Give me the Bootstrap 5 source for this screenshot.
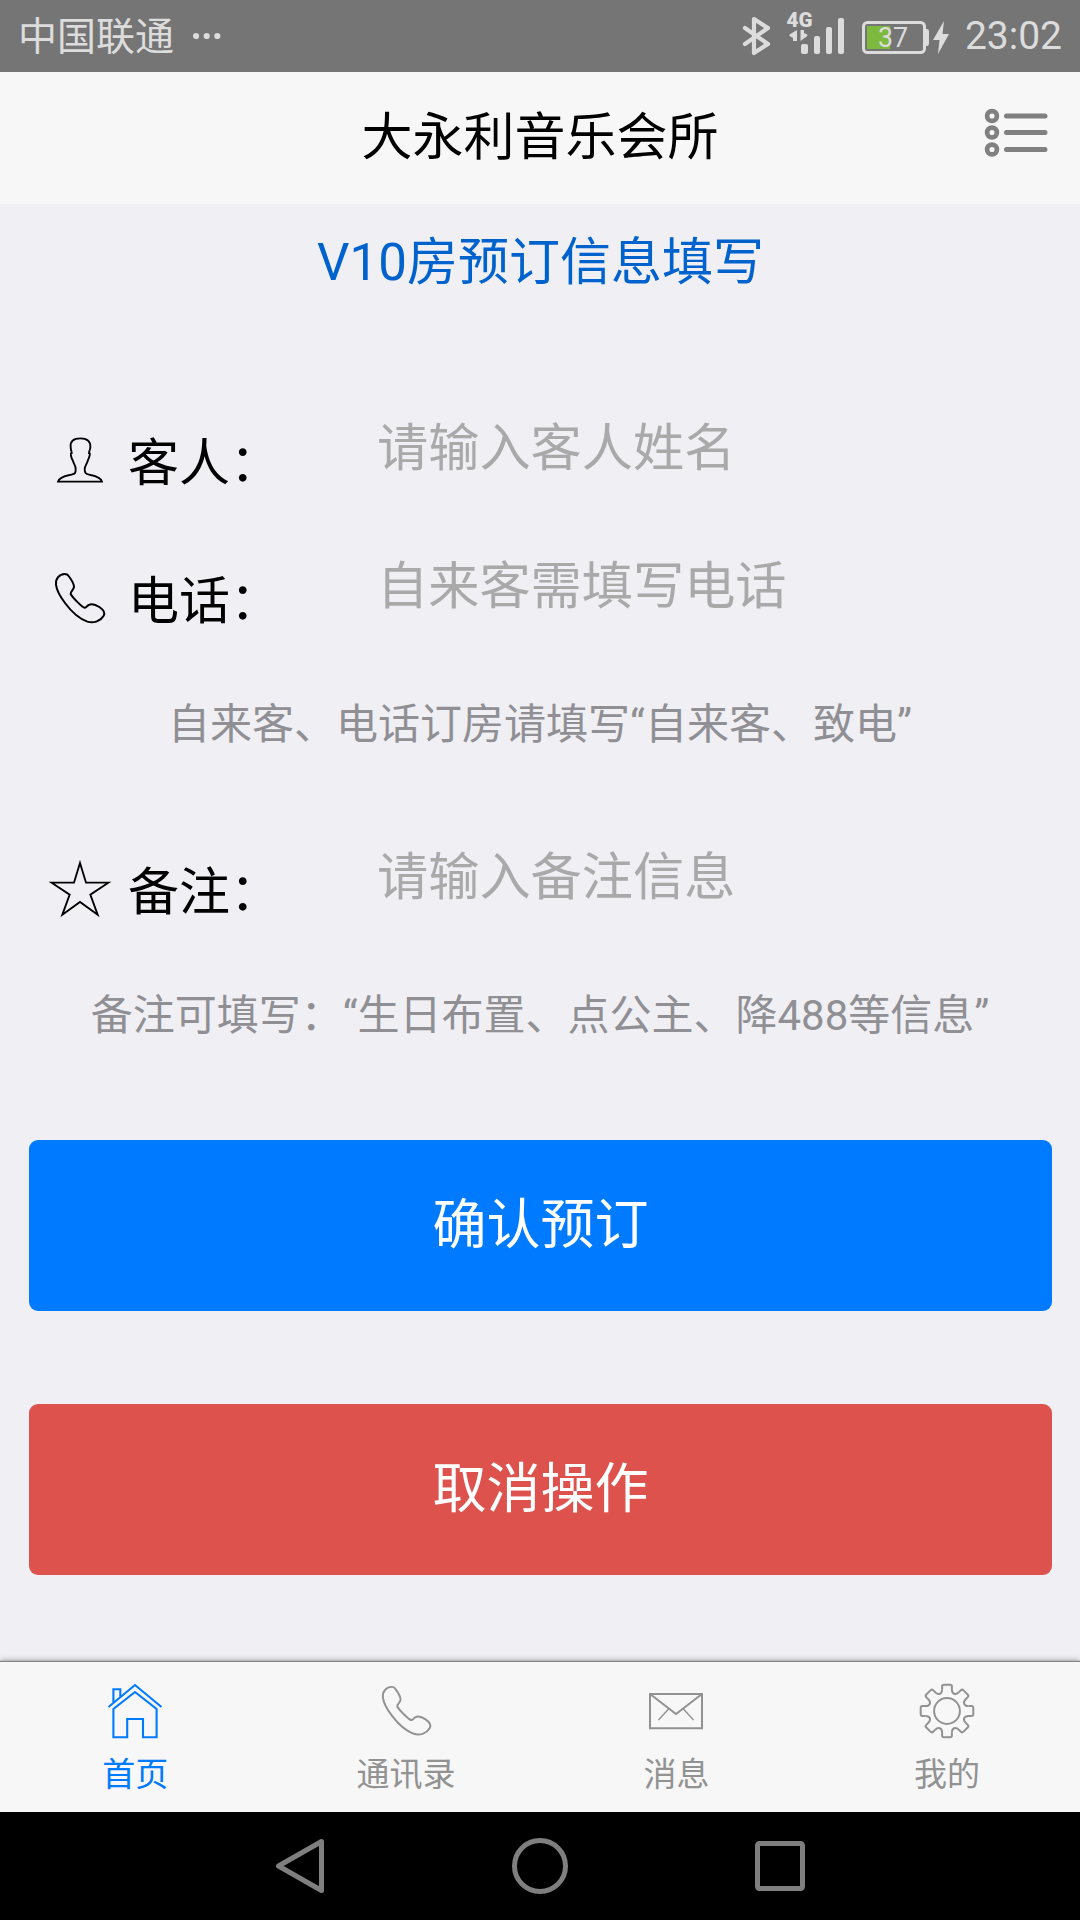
<!DOCTYPE html>
<html lang="zh-CN">
<head>
<meta charset="utf-8">
<meta name="viewport" content="width=device-width, initial-scale=1">
<title>大永利音乐会所</title>
<link href="https://cdn.jsdelivr.net/npm/bootstrap@5.3.0/dist/css/bootstrap.min.css" rel="stylesheet">
<style>
  body { font-family: Roboto, "Noto Sans CJK SC", sans-serif; font-size: 51px; line-height: 77px; color: #000; background: #efeff4; }
  .app { height: 1920px; width: 1080px; overflow: hidden; }
  .status-bar { height: 72px; background: #757575; color: #dcdcdc; font-size: 39px; line-height: 72px; padding: 0 18px 0 18px; }
  .status-bar svg { display: block; }
  .carrier { padding-top: 2px; }
  .signal-dots { margin-left: 19px; }
  .status-icons { margin-right: 13.5px; }
  .title-bar { height: 132px; background: #f7f7f7; padding-top: 27px; }
  .title-bar .menu-btn { top: 27px; right: 30px; }
  .room-title { height: 118px; padding: 20px 0 0 1px; color: #0062cc; margin-bottom: 73px; }
  .field { height: 138px; padding-left: 47px; }
  .field-note { margin-top: 46px; }
  .field svg { width: 66px; height: 66px; margin: 0 15px 9px 0; }
  .field label { width: 249px; padding-bottom: 2px; }
  .field .form-control { font-size: 51.2px; line-height: 77px; height: 77px; padding: 0; margin-bottom: 32px; border-radius: 0; width: 660px; }
  .field .form-control::placeholder { color: #a9a9a9; opacity: 1; }
  .hint { height: 107px; line-height: 107px; font-size: 42px; color: #8f8f94; }
  .action { height: 171px; font-size: 54px; border-radius: 9px; --bs-btn-color: #fff; --bs-btn-border-width: 0; }
  .action-ok { --bs-btn-bg: #007aff; --bs-btn-hover-bg: #0062cc; --bs-btn-hover-color: #fff; }
  .action-cancel { --bs-btn-bg: #dd524d; --bs-btn-hover-bg: #cf2d28; --bs-btn-hover-color: #fff; }
  .actions { gap: 93px; margin: 71px 28px 0 29px; }
  .tab-bar { height: 150px; background: #f7f7f7; color: #929292; box-shadow: 0 -1px 1px #858585, 0 -2px 5px rgba(0,0,0,.3); font-size: 33px; line-height: 50px; }
  .tab-bar a { color: inherit; padding-top: 18px; flex: 0 0 270.6px; }
  .tab-bar a.current { color: #007aff; }
  .tab-bar svg { width: 62px; height: 62px; margin-bottom: 8px; }
  .sys-nav { height: 108px; background: #000; }
</style>
<script src="https://cdn.jsdelivr.net/npm/bootstrap@5.3.0/dist/js/bootstrap.bundle.min.js"></script>
</head>
<body>
<svg class="d-none">
  <symbol id="phone" viewBox="51 493 198 198"><path fill="none" stroke="currentColor" stroke-width="6" d="M104 520C88 520 76 535 78 552C80 570 92 590 105 607C125 634 150 655 172 663C192 669 212 661 221 645C226 636 220 627 208 619C196 611 185 608 176 613C170 616 170 622 163 621C154 617 127 590 122 580C121 572 130 570 132 559C132 548 122 534 116 526C113 521 108 520 104 520Z"/></symbol>
</svg>
<div class="app d-flex flex-column">
  <header class="status-bar d-flex align-items-center">
    <span class="carrier">中国联通</span>
    <svg class="signal-dots" width="30" height="72" fill="currentColor"><circle cx="3" cy="36" r="3.1"/><circle cx="13.7" cy="36" r="3.1"/><circle cx="24.3" cy="36" r="3.1"/></svg>
    <svg class="status-icons ms-auto" width="210" height="72" viewBox="742 0 210 72" fill="#dcdcdc">
      <path d="M746 28L769 44L755 53V19L769 28L746 44" fill="none" stroke="#dcdcdc" stroke-width="4.2" stroke-linejoin="round" stroke-linecap="round"/>
      <text x="787.5" y="27" font-size="20.5" font-weight="900" textLength="26" lengthAdjust="spacingAndGlyphs">4G</text>
      <path d="M798 30V41H794V38L790.5 36V34.5ZM801.5 30V41L808.3 36V34.5L805 33V30Z"/>
      <rect x="802" y="44" width="7" height="10" rx="2"/><rect x="815" y="36" width="6" height="18" rx="2"/><rect x="827" y="27" width="6" height="27" rx="2"/><rect x="839" y="18" width="6" height="36" rx="2"/>
      <rect x="864.5" y="22.5" width="61" height="30" rx="4" fill="none" stroke="#dcdcdc" stroke-width="3"/>
      <path d="M926 29h2q2 0 2 3v11q0 3-2 3h-2z"/>
      <rect x="868" y="26" width="23.3" height="23" fill="#7cb93c"/>
      <text x="879" y="47" font-size="27" textLength="30" lengthAdjust="spacingAndGlyphs">37</text>
      <path d="M945 21L934 40H940.5L939 54L950 34H943.5Z"/>
    </svg>
    <span>23:02</span>
  </header>
  <nav class="title-bar position-relative text-center">
    大永利音乐会所
    <a class="menu-btn position-absolute d-block" href="#" aria-label="菜单"><svg class="d-block" width="66" height="66" viewBox="984 99 66 66" fill="none" stroke="#808080" stroke-width="4.7"><circle cx="992" cy="116" r="4.9"/><circle cx="992" cy="132.5" r="4.9"/><circle cx="992" cy="149.5" r="4.9"/><path stroke-linecap="round" stroke-width="5" d="M1006.5 116H1045M1006.5 132.5H1045M1006.5 149.5H1045"/></svg></a>
  </nav>
  <main class="flex-grow-1">
    <div class="room-title text-center">V10房预订信息填写</div>
    <div class="field d-flex align-items-center">
      <svg viewBox="50 80 198 198"><path fill="none" stroke="#000" stroke-width="5.6" d="M150 114C130 114 119 122 121 140C121 148 124 152 124 158C118 158 124 176 128 182C130 190 136 196 136 206C136 222 134 220 118 224C98 228 86 234 83 244H215C212 234 201 228 181 224C166 220 163 220 163 206C164 196 170 190 172 182C176 172 182 158 176 158C176 152 180 148 180 140C181 122 170 114 150 114Z"/></svg>
      <label for="guest">客人：</label>
      <input id="guest" class="form-control bg-transparent border-0" placeholder="请输入客人姓名">
    </div>
    <div class="field d-flex align-items-center">
      <svg><use href="#phone"/></svg>
      <label for="tel">电话：</label>
      <input id="tel" class="form-control bg-transparent border-0" placeholder="自来客需填写电话">
    </div>
    <div class="hint text-center">自来客、电话订房请填写“自来客、致电”</div>
    <div class="field field-note d-flex align-items-center">
      <svg viewBox="21 49 198 198"><path fill="none" stroke="#000" stroke-width="5.6" d="M120 70L138 129H205L151 165L173 225L120 187L67 225L89 165L35 129H102Z"/></svg>
      <label for="note">备注：</label>
      <input id="note" class="form-control bg-transparent border-0" placeholder="请输入备注信息">
    </div>
    <div class="hint text-center">备注可填写：“生日布置、点公主、降488等信息”</div>
    <div class="actions d-grid">
      <button class="btn action action-ok" type="button">确认预订</button>
      <button class="btn action action-cancel" type="button">取消操作</button>
    </div>
  </main>
  <nav class="tab-bar d-flex">
    <a class="current d-flex flex-column align-items-center text-decoration-none" href="#">
      <svg viewBox="-31 -31 62 62" fill="none" stroke="currentColor" stroke-width="2.1"><path d="M-26.5 -4L0 -26L26.5 -4M-21.6 -8V-21.7H-14.7V-14.5M0 -19L21.6 -2V26.3H8V8H-7.8V26.3H-21.6V-2Z"/></svg>首页</a>
    <a class="d-flex flex-column align-items-center text-decoration-none" href="#">
      <svg><use href="#phone" width="65" height="65" x="-1" y="-2"/></svg>通讯录</a>
    <a class="d-flex flex-column align-items-center text-decoration-none" href="#">
      <svg viewBox="-31 -31 62 62" fill="none" stroke="currentColor" stroke-width="2"><path d="M-26 -17H26V17.2H-26ZM-26 -17L0 3L26 -17"/><path stroke-width="1.4" d="M-7 -2.5L-17.5 9M7 -2.5L17.5 9"/></svg>消息</a>
    <a class="d-flex flex-column align-items-center text-decoration-none" href="#">
      <svg viewBox="-31 -31 62 62" fill="none" stroke="currentColor" stroke-width="2"><defs><path id="tooth" d="M-4.9 -21.5V-24.5Q-4.9 -26.3 -2.9 -26.3H2.9Q4.9 -26.3 4.9 -24.5V-21.5C4.9 -17 8.56 -15.5 11.74 -18.67"/></defs>
        <use href="#tooth"/><use href="#tooth" transform="rotate(45)"/><use href="#tooth" transform="rotate(90)"/><use href="#tooth" transform="rotate(135)"/><use href="#tooth" transform="rotate(180)"/><use href="#tooth" transform="rotate(225)"/><use href="#tooth" transform="rotate(270)"/><use href="#tooth" transform="rotate(315)"/><circle r="12.9"/></svg>我的</a>
  </nav>
  <footer class="sys-nav d-flex justify-content-center">
    <svg width="540" height="108" viewBox="270 1812 540 108" fill="none" stroke="#7f7f7f" stroke-width="5"><path stroke-linejoin="round" d="M321.5 1841.5V1890.5L278.5 1866Z"/><circle cx="540" cy="1866" r="25.5"/><rect x="757.5" y="1843.5" width="45" height="45" rx="2"/></svg>
  </footer>
</div>
</body>
</html>
